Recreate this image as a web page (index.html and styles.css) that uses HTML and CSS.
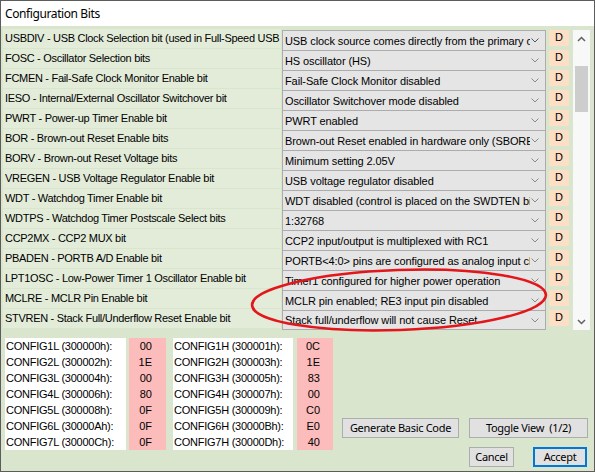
FILE: index.html
```html
<!DOCTYPE html>
<html>
<head>
<meta charset="utf-8">
<link rel="stylesheet" href="styles.css">
</head>
<body>
<div class="window">
  <div class="titlebar">Configuration Bits</div>
  <div class="content">
    <div class="grid">
      <div class="labels">
        <div class="lbl">USBDIV - USB Clock Selection bit (used in Full-Speed USB mode only; UCFG:FSEN = 1)</div>
        <div class="lbl">FOSC - Oscillator Selection bits</div>
        <div class="lbl">FCMEN - Fail-Safe Clock Monitor Enable bit</div>
        <div class="lbl">IESO - Internal/External Oscillator Switchover bit</div>
        <div class="lbl">PWRT - Power-up Timer Enable bit</div>
        <div class="lbl">BOR - Brown-out Reset Enable bits</div>
        <div class="lbl">BORV - Brown-out Reset Voltage bits</div>
        <div class="lbl">VREGEN - USB Voltage Regulator Enable bit</div>
        <div class="lbl">WDT - Watchdog Timer Enable bit</div>
        <div class="lbl">WDTPS - Watchdog Timer Postscale Select bits</div>
        <div class="lbl">CCP2MX - CCP2 MUX bit</div>
        <div class="lbl">PBADEN - PORTB A/D Enable bit</div>
        <div class="lbl">LPT1OSC - Low-Power Timer 1 Oscillator Enable bit</div>
        <div class="lbl">MCLRE - MCLR Pin Enable bit</div>
        <div class="lbl">STVREN - Stack Full/Underflow Reset Enable bit</div>
      </div>
      <div class="combos">
        <div class="combo first"><span class="val">USB clock source comes directly from the primary oscillator block with no postscale</span><svg class="chev" width="8" height="5" viewBox="0 0 8 5"><path d="M0.5 0.5 L4 4 L7.5 0.5"/></svg></div>
        <div class="combo"><span class="val">HS oscillator (HS)</span><svg class="chev" width="8" height="5" viewBox="0 0 8 5"><path d="M0.5 0.5 L4 4 L7.5 0.5"/></svg></div>
        <div class="combo"><span class="val">Fail-Safe Clock Monitor disabled</span><svg class="chev" width="8" height="5" viewBox="0 0 8 5"><path d="M0.5 0.5 L4 4 L7.5 0.5"/></svg></div>
        <div class="combo"><span class="val">Oscillator Switchover mode disabled</span><svg class="chev" width="8" height="5" viewBox="0 0 8 5"><path d="M0.5 0.5 L4 4 L7.5 0.5"/></svg></div>
        <div class="combo"><span class="val">PWRT enabled</span><svg class="chev" width="8" height="5" viewBox="0 0 8 5"><path d="M0.5 0.5 L4 4 L7.5 0.5"/></svg></div>
        <div class="combo"><span class="val">Brown-out Reset enabled in hardware only (SBOREN is disabled)</span><svg class="chev" width="8" height="5" viewBox="0 0 8 5"><path d="M0.5 0.5 L4 4 L7.5 0.5"/></svg></div>
        <div class="combo"><span class="val">Minimum setting 2.05V</span><svg class="chev" width="8" height="5" viewBox="0 0 8 5"><path d="M0.5 0.5 L4 4 L7.5 0.5"/></svg></div>
        <div class="combo"><span class="val">USB voltage regulator disabled</span><svg class="chev" width="8" height="5" viewBox="0 0 8 5"><path d="M0.5 0.5 L4 4 L7.5 0.5"/></svg></div>
        <div class="combo"><span class="val">WDT disabled (control is placed on the SWDTEN bit)</span><svg class="chev" width="8" height="5" viewBox="0 0 8 5"><path d="M0.5 0.5 L4 4 L7.5 0.5"/></svg></div>
        <div class="combo"><span class="val">1:32768</span><svg class="chev" width="8" height="5" viewBox="0 0 8 5"><path d="M0.5 0.5 L4 4 L7.5 0.5"/></svg></div>
        <div class="combo"><span class="val">CCP2 input/output is multiplexed with RC1</span><svg class="chev" width="8" height="5" viewBox="0 0 8 5"><path d="M0.5 0.5 L4 4 L7.5 0.5"/></svg></div>
        <div class="combo"><span class="val">PORTB&lt;4:0&gt; pins are configured as analog input channels on Reset</span><svg class="chev" width="8" height="5" viewBox="0 0 8 5"><path d="M0.5 0.5 L4 4 L7.5 0.5"/></svg></div>
        <div class="combo"><span class="val">Timer1 configured for higher power operation</span><svg class="chev" width="8" height="5" viewBox="0 0 8 5"><path d="M0.5 0.5 L4 4 L7.5 0.5"/></svg></div>
        <div class="combo"><span class="val">MCLR pin enabled; RE3 input pin disabled</span><svg class="chev" width="8" height="5" viewBox="0 0 8 5"><path d="M0.5 0.5 L4 4 L7.5 0.5"/></svg></div>
        <div class="combo"><span class="val">Stack full/underflow will not cause Reset</span><svg class="chev" width="8" height="5" viewBox="0 0 8 5"><path d="M0.5 0.5 L4 4 L7.5 0.5"/></svg></div>
      </div>
      <div class="dcol">
        <div class="d">D</div><div class="d">D</div><div class="d">D</div><div class="d">D</div><div class="d">D</div>
        <div class="d">D</div><div class="d">D</div><div class="d">D</div><div class="d">D</div><div class="d">D</div>
        <div class="d">D</div><div class="d">D</div><div class="d">D</div><div class="d">D</div><div class="d">D</div>
      </div>
      <div class="scrollbar">
        <svg class="arrow" width="9" height="6" viewBox="0 0 9 6"><path d="M1 5 L4.5 1.5 L8 5"/></svg>
        <div class="thumb"></div>
        <svg class="arrow down" width="9" height="6" viewBox="0 0 9 6"><path d="M1 1 L4.5 4.5 L8 1"/></svg>
      </div>
    </div>
    <div class="bottom">
      <div class="cfg">
        <div class="names n1">
          <div>CONFIG1L (300000h):</div>
          <div>CONFIG2L (300002h):</div>
          <div>CONFIG3L (300004h):</div>
          <div>CONFIG4L (300006h):</div>
          <div>CONFIG5L (300008h):</div>
          <div>CONFIG6L (30000Ah):</div>
          <div>CONFIG7L (30000Ch):</div>
        </div>
        <div class="vals v1">
          <div>00</div><div>1E</div><div>00</div><div>80</div><div>0F</div><div>0F</div><div>0F</div>
        </div>
        <div class="names n2">
          <div>CONFIG1H (300001h):</div>
          <div>CONFIG2H (300003h):</div>
          <div>CONFIG3H (300005h):</div>
          <div>CONFIG4H (300007h):</div>
          <div>CONFIG5H (300009h):</div>
          <div>CONFIG6H (30000Bh):</div>
          <div>CONFIG7H (30000Dh):</div>
        </div>
        <div class="vals v2">
          <div>0C</div><div>1E</div><div>83</div><div>00</div><div>C0</div><div>E0</div><div>40</div>
        </div>
      </div>
      <div class="actions">
        <div class="btnrow">
          <div class="btn gen">Generate Basic Code</div>
          <div class="btn toggle">Toggle View&nbsp;&nbsp;(1/2)</div>
        </div>
        <div class="btnrow right">
          <div class="btn cancel">Cancel</div>
          <div class="btn accept">Accept</div>
        </div>
      </div>
    </div>
  </div>
  <svg class="annot" width="595" height="472" viewBox="0 0 595 472">
    <ellipse cx="399" cy="300" rx="147" ry="30" transform="rotate(-2 399 300)" fill="none" stroke="#e3161b" stroke-width="2.6"/>
  </svg>
</div>
</body>
</html>
```

FILE: styles.css
```css
html, body {
  margin: 0;
  padding: 0;
  background: #ffffff;
}

.window {
  position: relative;
  width: 595px;
  height: 472px;
  box-sizing: border-box;
  border: 1px solid #5c5c5c;
  background: #d9e5cd;
  display: flex;
  flex-direction: column;
  font-family: "Liberation Sans", Arial, sans-serif;
  font-size: 11px;
  color: #000;
  overflow: hidden;
}

.titlebar {
  height: 25px;
  background: #ffffff;
  font-family: "Noto Sans", "Open Sans", sans-serif;
  font-size: 12px;
  letter-spacing: -0.4px;
  line-height: 25px;
  padding-left: 4px;
  color: #000;
}

.content {
  flex: 1;
  padding: 3px 3px 0 2px;
  display: flex;
  flex-direction: column;
}

.grid {
  display: flex;
  height: 301px;
}

.labels {
  width: 278px;
}

.lbl {
  height: 19px;
  margin-bottom: 1px;
  box-sizing: border-box;
  background: #e3ecd9;
  padding: 2px 0 0 2px;
  line-height: 14px;
  overflow: hidden;
  letter-spacing: -0.3px;
}

.combos {
  width: 264px;
  margin-left: 1px;
  margin-top: 1px;
}

.combo {
  height: 20px;
  box-sizing: border-box;
  border: 1px solid #acacac;
  border-bottom: none;
  background: #e5e5e5;
  display: flex;
  align-items: center;
  padding-left: 2px;
}

.combo:last-child {
  border-bottom: 1px solid #acacac;
}

.val {
  width: 245px;
  overflow: hidden;
  white-space: nowrap;
  letter-spacing: -0.1px;
}

.chev {
  margin-left: auto;
  margin-right: 6px;
}

.chev path {
  fill: none;
  stroke: #8a8a8a;
  stroke-width: 1;
}

.combo.first .chev path {
  stroke: #555;
}

.dcol {
  width: 20px;
  margin-left: 3px;
  margin-top: 1px;
  display: flex;
  flex-direction: column;
  gap: 4px;
}

.d {
  height: 16px;
  background: #fddfc5;
  text-align: center;
  line-height: 14px;
}

.scrollbar {
  width: 17px;
  height: 300px;
  margin-left: 4px;
  margin-top: 1px;
  background: #f8f8f8;
  display: flex;
  flex-direction: column;
  align-items: center;
}

.arrow {
  margin-top: 6px;
}

.arrow path {
  fill: none;
  stroke: #606060;
  stroke-width: 1.5;
}

.thumb {
  width: 13px;
  height: 46px;
  margin-top: 24px;
  background: #cdcdcd;
}

.arrow.down {
  margin-top: auto;
  margin-bottom: 5px;
}

.bottom {
  display: flex;
  margin-top: 8px;
}

.cfg {
  display: flex;
  margin-left: 2px;
  height: 112px;
}

.names, .vals {
  display: flex;
  flex-direction: column;
}

.names div, .vals div {
  height: 16px;
  line-height: 16px;
}

.names {
  background: #ffffff;
  padding-left: 1px;
  box-sizing: border-box;
  letter-spacing: -0.25px;
}

.vals {
  background: #fdbcbc;
  text-align: right;
  padding-right: 14px;
  box-sizing: border-box;
}

.n1 { width: 121px; }
.v1 { width: 37px; margin-left: 3px; }
.n2 { width: 120px; margin-left: 7px; }
.v2 { width: 36px; margin-left: 4px; padding-right: 13px; }

.actions {
  margin-left: 9px;
  margin-top: 80px;
  display: flex;
  flex-direction: column;
  gap: 9px;
}

.btnrow {
  display: flex;
  gap: 10px;
}

.btnrow.right {
  justify-content: flex-end;
  gap: 19px;
  margin-right: 1px;
}

.btn {
  height: 20px;
  box-sizing: border-box;
  border: 1px solid #adadad;
  background: #e1e1e1;
  font-family: "Noto Sans", "Open Sans", sans-serif;
  font-size: 11px;
  letter-spacing: -0.3px;
  line-height: 18px;
  text-align: center;
  color: #000;
}

.gen { width: 117px; }
.toggle { width: 119px; }
.cancel { width: 45px; }
.accept {
  width: 54px;
  border: 2px solid #0078d7;
  line-height: 16px;
}

.annot {
  position: absolute;
  left: -1px;
  top: -1px;
  pointer-events: none;
}
```
